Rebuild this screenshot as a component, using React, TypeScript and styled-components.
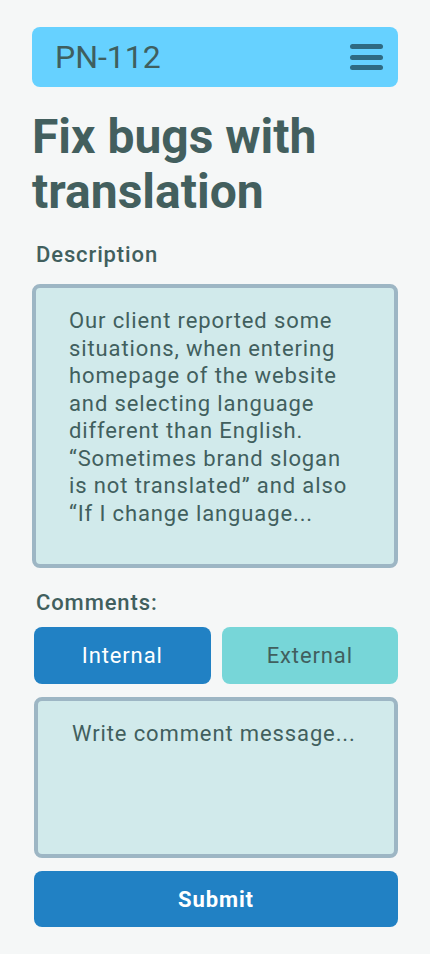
import React, { useState } from "react";
import styled, { createGlobalStyle } from "styled-components";

const Global = createGlobalStyle`
  html, body { margin: 0; padding: 0; background: #f5f7f7; }
  body { font-family: Roboto, "Noto Sans", Arial, sans-serif; }
  * { box-sizing: border-box; }
`;

const Page = styled.div`
  width: 430px;
  min-height: 954px;
  padding: 27px 32px 0 32px;
  display: flex;
  flex-direction: column;
  color: #415f5e;
`;

const Header = styled.header`
  height: 60px;
  background: #66d1ff;
  border-radius: 8px;
  display: flex;
  align-items: center;
  justify-content: space-between;
  padding: 0 14px 0 23px;
`;

const Code = styled.span`
  font-size: 32px;
  font-weight: 400;
  color: #3f5f5f;
  line-height: 1;
`;

const MenuButton = styled.button`
  width: 34px;
  height: 26px;
  padding: 0;
  border: 0;
  background: transparent;
  display: flex;
  flex-direction: column;
  justify-content: space-between;
  cursor: pointer;
`;

const Bar = styled.span`
  display: block;
  width: 33px;
  height: 5px;
  border-radius: 3px;
  background: #2f6a82;
`;

const Title = styled.h1`
  margin: 22px 0 0 0;
  font-size: 48px;
  line-height: 55px;
  font-weight: 700;
  color: #435f5e;
`;

const Label = styled.div<{ $top: number }>`
  margin: ${(p) => p.$top}px 0 0 4px;
  font-size: 22px;
  font-weight: 500;
  line-height: 26px;
  letter-spacing: 0.04em;
  color: #415f5e;
`;

const DescriptionBox = styled.div`
  margin-top: 16px;
  height: 284px;
  border: 4px solid #9db6c4;
  border-radius: 8px;
  background: #d1eaeb;
  padding: 19px 40px 0 33px;
  font-size: 22px;
  line-height: 27.5px;
  letter-spacing: 0.04em;
  color: #415f5e;
`;

const Tabs = styled.div`
  margin: 11px 0 0 2px;
  display: grid;
  grid-template-columns: 1fr 1fr;
  gap: 11px;
`;

const Tab = styled.button<{ $active: boolean }>`
  height: 57px;
  border: 0;
  border-radius: 8px;
  font-family: Roboto, "Noto Sans", Arial, sans-serif;
  font-size: 22px;
  font-weight: 400;
  letter-spacing: 0.04em;
  background: ${(p) => (p.$active ? "#2181c4" : "#77d6d8")};
  color: ${(p) => (p.$active ? "#ffffff" : "#415f5e")};
  cursor: pointer;
`;

const CommentArea = styled.textarea`
  margin: 13px 0 0 2px;
  height: 161px;
  border: 4px solid #9db6c4;
  border-radius: 8px;
  background: #d1eaeb;
  padding: 19px 20px 0 34px;
  font-family: Roboto, "Noto Sans", Arial, sans-serif;
  font-size: 22px;
  line-height: 27px;
  letter-spacing: 0.04em;
  color: #415f5e;
  resize: none;
  outline: none;
  &::placeholder {
    color: #415f5e;
    opacity: 1;
  }
`;

const Submit = styled.button`
  margin: 13px 0 0 2px;
  height: 56px;
  border: 0;
  border-radius: 8px;
  background: #2181c4;
  color: #ffffff;
  font-family: Roboto, "Noto Sans", Arial, sans-serif;
  font-size: 22px;
  font-weight: 700;
  letter-spacing: 0.04em;
  cursor: pointer;
`;

export default function App() {
  const [tab, setTab] = useState<"internal" | "external">("internal");
  return (
    <>
      <Global />
      <Page>
        <Header>
          <Code>PN-112</Code>
          <MenuButton aria-label="Menu">
            <Bar />
            <Bar />
            <Bar />
          </MenuButton>
        </Header>
        <Title>Fix bugs with translation</Title>
        <Label $top={23}>Description</Label>
        <DescriptionBox>
          Our client reported some situations, when entering homepage of the
          website and selecting language different than English. “Sometimes
          brand slogan is not translated” and also “If I change language...
        </DescriptionBox>
        <Label $top={22}>Comments:</Label>
        <Tabs>
          <Tab $active={tab === "internal"} onClick={() => setTab("internal")}>
            Internal
          </Tab>
          <Tab $active={tab === "external"} onClick={() => setTab("external")}>
            External
          </Tab>
        </Tabs>
        <CommentArea placeholder="Write comment message..." />
        <Submit>Submit</Submit>
      </Page>
    </>
  );
}
